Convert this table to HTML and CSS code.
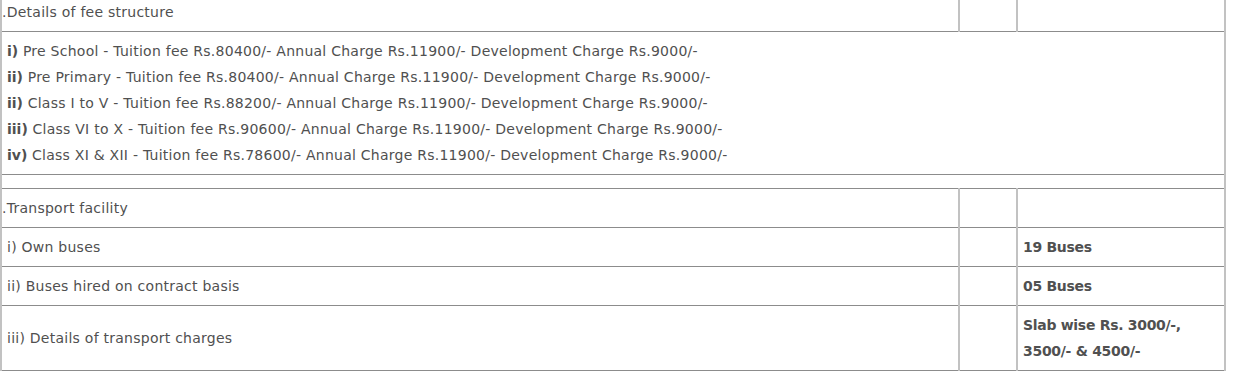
FILE: index.html
```html
<!DOCTYPE html>
<html>
<head>
<meta charset="utf-8">
<link rel="stylesheet" href="styles.css">
</head>
<body>
<div class="wrap">
<table class="info">
  <colgroup>
    <col class="c-desc">
    <col class="c-mid">
    <col class="c-val">
  </colgroup>
  <tbody>
    <tr>
      <td class="sec">.Details of fee structure</td>
      <td></td>
      <td></td>
    </tr>
    <tr>
      <td colspan="3">
        <b>i)</b> Pre School - Tuition fee Rs.80400/- Annual Charge Rs.11900/- Development Charge Rs.9000/-<br>
        <b>ii)</b> Pre Primary - Tuition fee Rs.80400/- Annual Charge Rs.11900/- Development Charge Rs.9000/-<br>
        <b>ii)</b> Class I to V - Tuition fee Rs.88200/- Annual Charge Rs.11900/- Development Charge Rs.9000/-<br>
        <b>iii)</b> Class VI to X - Tuition fee Rs.90600/- Annual Charge Rs.11900/- Development Charge Rs.9000/-<br>
        <b>iv)</b> Class XI &amp; XII - Tuition fee Rs.78600/- Annual Charge Rs.11900/- Development Charge Rs.9000/-
      </td>
    </tr>
    <tr class="gap">
      <td colspan="3"></td>
    </tr>
    <tr>
      <td class="sec">.Transport facility</td>
      <td></td>
      <td></td>
    </tr>
    <tr>
      <td>i) Own buses</td>
      <td></td>
      <td class="val">19 Buses</td>
    </tr>
    <tr>
      <td>ii) Buses hired on contract basis</td>
      <td></td>
      <td class="val">05 Buses</td>
    </tr>
    <tr>
      <td>iii) Details of transport charges</td>
      <td></td>
      <td class="val">Slab wise Rs. 3000/-,<br>3500/- &amp; 4500/-</td>
    </tr>
  </tbody>
</table>
</div>
</body>
</html>
```

FILE: styles.css
```css
html, body {
  margin: 0;
  padding: 0;
  background: #ffffff;
}

.wrap {
  margin-top: -8px;
}

.info {
  border-collapse: collapse;
  table-layout: fixed;
  width: 1224px;
  font-family: "DejaVu Sans", "Open Sans", sans-serif;
  font-size: 14px;
  letter-spacing: 0.25px;
  line-height: 26px;
  color: #505050;
}

.c-desc { width: 958px; }
.c-mid { width: 58px; }
.c-val { width: 208px; }

.info td {
  border-top: 1px solid #8c8c8c;
  border-bottom: 1px solid #8c8c8c;
  border-left: 2px solid #c2c2c2;
  border-right: 2px solid #c2c2c2;
  padding: 6px 5px;
  vertical-align: middle;
  text-align: left;
}

.info td.sec {
  padding-left: 0;
}

.info b {
  font-weight: 700;
  letter-spacing: 0;
}

.info td.val {
  font-weight: 700;
  letter-spacing: -0.3px;
}

.gap td {
  padding: 6px 0 7px;
  line-height: 0;
}
```
